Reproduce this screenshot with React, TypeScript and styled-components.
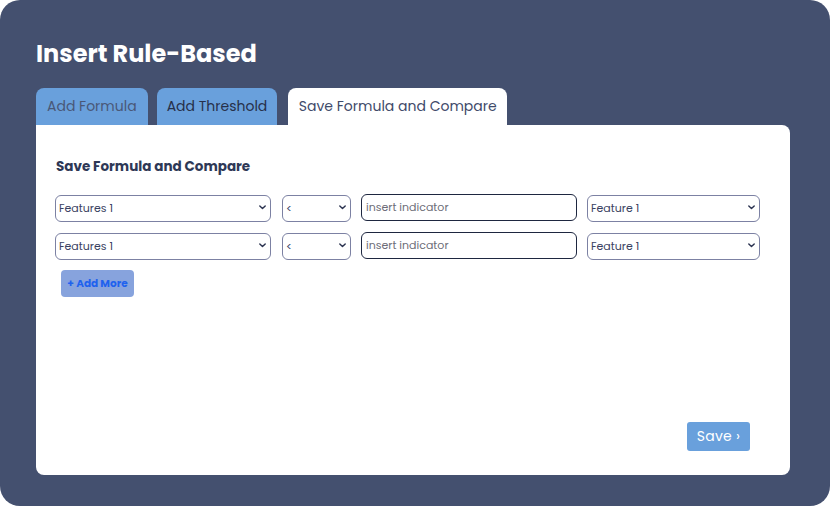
import React from "react";
import styled, { createGlobalStyle } from "styled-components";

const Global = createGlobalStyle`
  html, body { margin: 0; padding: 0; background: #ffffff; }
  body { font-family: "Poppins", "Inter", "Noto Sans", sans-serif; }
  * { box-sizing: border-box; }
`;

const Panel = styled.div`
  width: 830px;
  height: 506px;
  background: #44506f;
  border-radius: 20px;
  padding: 39px 40px 31px 36px;
  display: flex;
  flex-direction: column;
`;

const Title = styled.h1`
  margin: 0;
  font-size: 24px;
  line-height: 30px;
  font-weight: 700;
  color: #ffffff;
`;

const TabBar = styled.div`
  display: flex;
  align-items: flex-end;
  margin-top: 19px;
  height: 37px;
`;

const Tab = styled.div<{ $active?: boolean; $muted?: boolean; $gap: number; $pad: number }>`
  height: 37px;
  padding: 0 ${(p) => p.$pad}px;
  margin-right: ${(p) => p.$gap}px;
  display: flex;
  align-items: center;
  border-radius: 8px 8px 0 0;
  font-size: 14px;
  background: ${(p) => (p.$active ? "#ffffff" : "#69a0dc")};
  color: ${(p) => (p.$active ? "#3f4a6a" : p.$muted ? "#4a5878" : "#27304a")};
`;

const Card = styled.div`
  flex: 1;
  background: #ffffff;
  border-radius: 0 8px 8px 8px;
  padding: 33px 20px 24px 19px;
  display: flex;
  flex-direction: column;
`;

const Heading = styled.h2`
  margin: 0 0 0 1px;
  font-size: 13.5px;
  line-height: 18px;
  font-weight: 700;
  color: #2e3856;
`;

const Rows = styled.div`
  margin-top: 18px;
  display: flex;
  flex-direction: column;
  gap: 11px;
`;

const Row = styled.div`
  display: flex;
  align-items: center;
  height: 27px;
`;

const SelectWrap = styled.div<{ $w: number; $gap: number }>`
  position: relative;
  width: ${(p) => p.$w}px;
  margin-right: ${(p) => p.$gap}px;
  height: 27px;
`;

const Select = styled.select`
  appearance: none;
  -webkit-appearance: none;
  width: 100%;
  height: 27px;
  border: 1px solid #7c81a3;
  border-radius: 6px;
  background: #ffffff;
  color: #3a4262;
  font-family: inherit;
  font-size: 11px;
  padding: 0 16px 0 3px;
  outline: none;
`;

const Chevron = styled.svg`
  position: absolute;
  right: 5px;
  top: 11px;
  width: 7px;
  height: 5px;
  pointer-events: none;
`;

const Input = styled.input`
  width: 216px;
  margin-right: 10px;
  height: 27px;
  border: 1.5px solid #1e2740;
  border-radius: 6px;
  background: #ffffff;
  font-family: inherit;
  font-size: 11px;
  padding: 0 4px;
  &::placeholder { color: #6d6d78; }
`;

const AddMore = styled.button`
  margin: 11px 0 0 6px;
  align-self: flex-start;
  width: 73px;
  height: 27px;
  border: none;
  border-radius: 4px;
  background: #87a3dd;
  color: #1f62ee;
  font-family: inherit;
  font-size: 10.5px;
  font-weight: 700;
  padding: 0;
`;

const Footer = styled.div`
  margin-top: auto;
  display: flex;
  justify-content: flex-end;
  padding-right: 20px;
`;

const SaveButton = styled.button`
  width: 63px;
  height: 29px;
  border: none;
  border-radius: 3px;
  background: #69a0dc;
  color: #ffffff;
  font-family: inherit;
  font-size: 14px;
  letter-spacing: 0.3px;
  padding: 0;
`;

function Dropdown({ w, gap, label }: { w: number; gap: number; label: string }) {
  return (
    <SelectWrap $w={w} $gap={gap}>
      <Select defaultValue="v">
        <option value="v">{label}</option>
      </Select>
      <Chevron viewBox="0 0 7 5" fill="none">
        <path d="M0.8 0.9 L3.5 3.6 L6.2 0.9" stroke="#2b3350" strokeWidth="1.4" strokeLinecap="round" strokeLinejoin="round" />
      </Chevron>
    </SelectWrap>
  );
}

function FormulaRow() {
  return (
    <Row>
      <Dropdown w={216} gap={11} label="Features 1" />
      <Dropdown w={69} gap={10} label="<" />
      <Input placeholder="insert indicator" />
      <Dropdown w={173} gap={0} label="Feature 1" />
    </Row>
  );
}

export default function App() {
  return (
    <>
      <Global />
      <Panel>
        <Title>Insert Rule-Based</Title>
        <TabBar>
          <Tab $muted $gap={9} $pad={11}>Add Formula</Tab>
          <Tab $gap={11} $pad={10}>Add Threshold</Tab>
          <Tab $active $gap={0} $pad={10.5}>Save Formula and Compare</Tab>
        </TabBar>
        <Card>
          <Heading>Save Formula and Compare</Heading>
          <Rows>
            <FormulaRow />
            <FormulaRow />
          </Rows>
          <AddMore>+ Add More</AddMore>
          <Footer>
            <SaveButton>Save ›</SaveButton>
          </Footer>
        </Card>
      </Panel>
    </>
  );
}
